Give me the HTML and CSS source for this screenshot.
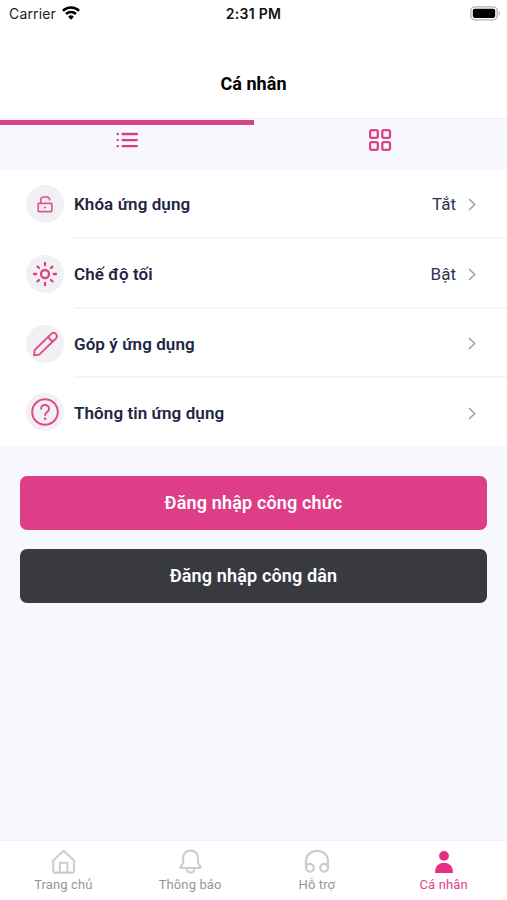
FILE: index.html
```html
<!DOCTYPE html>
<html lang="vi">
<head>
<meta charset="utf-8">
<meta name="viewport" content="width=device-width, initial-scale=1">
<title>Cá nhân</title>
<link rel="stylesheet" href="styles.css">
</head>
<body>
<div class="screen">
  <div class="status">
    <div class="carrier"><span>Carrier</span>
      <svg width="18" height="14" viewBox="0 0 18 14"><g fill="none" stroke="#000" stroke-width="2.5"><path d="M.9 4.8a11.6 11.6 0 0 1 16.2 0"/><path d="M4 8a7.2 7.2 0 0 1 10 0"/></g><path d="M9 13.7 6.1 10.8a4.1 4.1 0 0 1 5.8 0z"/></svg>
    </div>
    <span class="clock">2:31 PM</span>
    <svg class="battery" width="31" height="15" viewBox="0 0 31 15"><rect x=".9" y=".9" width="26.2" height="13" rx="4" fill="#fff" stroke="#b3b3b3" stroke-width="1.4"/><rect x="2.8" y="2.8" width="22.4" height="9.2" rx="2"/><path d="M28.6 5.2q3 2.2 0 4.4z" fill="#b3b3b3"/></svg>
  </div>
  <header class="title">Cá nhân</header>
  <nav class="tabs">
    <div class="tab tab-active">
      <svg width="24" height="24" viewBox="0 0 24 24" stroke="#d83d86" stroke-width="2.3" stroke-linecap="round"><path d="M7.5 6h14.4M7.5 12.1h14.4M7.5 18.2h14.4M2.6 6h.2M2.6 12.1h.2M2.6 18.2h.2"/></svg>
    </div>
    <div class="tab">
      <svg width="24" height="24" viewBox="0 0 24 24" fill="none" stroke="#d84486" stroke-width="2.3"><rect x="2.1" y="2.1" width="7.7" height="7.7" rx="1.6"/><rect x="14.3" y="2.1" width="7.7" height="7.7" rx="1.6"/><rect x="2.1" y="14.1" width="7.7" height="7.7" rx="1.6"/><rect x="14.3" y="14.1" width="7.7" height="7.7" rx="1.6"/></svg>
    </div>
  </nav>
  <main class="list">
    <div class="row">
      <span class="badge"><svg width="38" height="38" viewBox="0 0 38 38"><g fill="none" stroke="#e45090" stroke-width="1.6" stroke-linejoin="round"><rect x="12.2" y="18.4" width="13.6" height="8.2" rx=".6"/><path d="M14.8 18.2v-3.4q0-2.8 2.8-2.8h3.2q2.8 0 2.8 2.8v.6"/></g><circle cx="19" cy="22.5" r="1.1" fill="#e45090"/></svg></span>
      <div class="cell"><span class="label">Khóa ứng dụng</span><span class="value">Tắt</span><svg class="chevron" width="8" height="13" viewBox="0 0 8 13"><path d="m1 1 5.7 5.5L1 12"/></svg></div>
    </div>
    <div class="row">
      <span class="badge"><svg width="38" height="38" viewBox="0 0 38 38" fill="none" stroke="#df3f86" stroke-width="2.3" stroke-linecap="round"><circle cx="19" cy="19" r="4"/><path d="M19 8v2.2M19 27.8V30M8 19h2.2M27.8 19H30M11.6 11.6l1.4 1.4M25 25l1.4 1.4M11.6 26.4l1.4-1.4M25 13l1.4-1.4"/></svg></span>
      <div class="cell"><span class="label">Chế độ tối</span><span class="value">Bật</span><svg class="chevron" width="8" height="13" viewBox="0 0 8 13"><path d="m1 1 5.7 5.5L1 12"/></svg></div>
    </div>
    <div class="row">
      <span class="badge"><svg width="38" height="38" viewBox="0 0 38 38" fill="none" stroke="#e24a8e" stroke-width="1.8" stroke-linejoin="round"><path d="M8 30.4 8.7 25 25.3 8.8c3-2.8 7.6 1.6 4.6 4.7L13.2 29.7z"/><path d="M22.6 11.5q.8 3.8 4.7 4.7"/></svg></span>
      <div class="cell"><span class="label">Góp ý ứng dụng</span><svg class="chevron" width="8" height="13" viewBox="0 0 8 13"><path d="m1 1 5.7 5.5L1 12"/></svg></div>
    </div>
    <div class="row">
      <span class="badge"><svg width="38" height="38" viewBox="0 0 38 38"><g fill="none" stroke="#e24a8e" stroke-width="2" stroke-linecap="round"><circle cx="19" cy="19" r="12.8"/><path d="M15.1 15.8c.2-5.2 8.1-5 8 .1 0 3.2-4 3-4 6.2"/></g><circle cx="19.1" cy="25.7" r="1.3" fill="#e24a8e"/></svg></span>
      <div class="cell"><span class="label">Thông tin ứng dụng</span><svg class="chevron" width="8" height="13" viewBox="0 0 8 13"><path d="m1 1 5.7 5.5L1 12"/></svg></div>
    </div>
  </main>
  <div class="actions">
    <button class="button primary">Đăng nhập công chức</button>
    <button class="button dark">Đăng nhập công dân</button>
  </div>
  <nav class="bottom">
    <div class="item">
      <svg width="26" height="26" viewBox="0 0 26 26" fill="none" stroke="#ceccd3" stroke-width="2.1" stroke-linejoin="round"><path d="M3.2 11.4 13.6 1.8 24 11.4V22q0 1.6-1.6 1.6H4.8q-1.6 0-1.6-1.6z"/><path d="M9.8 23.6v-9.8h7.6v9.8"/></svg>
      <span>Trang chủ</span>
    </div>
    <div class="item">
      <svg width="26" height="26" viewBox="0 0 26 26" fill="none" stroke="#ceccd3" stroke-width="2.1" stroke-linejoin="round"><path d="M6.2 14V8.8c0-9.6 14.8-9.6 14.8 0V14l2.6 3.8q.5 1.2-.9 1.2H4.5q-1.4 0-.9-1.2z"/><path d="M9.6 19.3c.3 5.7 7.7 5.7 8 0"/></svg>
      <span>Thông báo</span>
    </div>
    <div class="item">
      <svg width="26" height="26" viewBox="0 0 26 26" fill="none" stroke="#cbcad2" stroke-width="2.2"><path d="M2 18.5v-6C2-1.8 24-1.8 24 12.5v6"/><circle cx="5.9" cy="18.7" r="3.9"/><circle cx="20.1" cy="18.7" r="3.9"/></svg>
      <span>Hỗ trợ</span>
    </div>
    <div class="item item-active">
      <svg width="26" height="26" viewBox="0 0 26 26" fill="#e72c83"><circle cx="13" cy="6.9" r="4.9"/><path d="M4.2 23.9v-1.5c0-11.4 17.6-11.4 17.6 0v1.5z"/></svg>
      <span>Cá nhân</span>
    </div>
  </nav>
</div>
</body>
</html>
```

FILE: styles.css
```css
* { box-sizing: border-box; }
body { margin: 0; font-family: Roboto, "Noto Sans", sans-serif; color: #232543; }
svg { display: block; flex: none; }
.screen { width: 507px; height: 900px; display: flex; flex-direction: column; background: #f7f8fd; overflow: hidden; }
.status { height: 50px; padding: 6px 6px 0 9px; display: grid; grid-template-columns: 1fr auto 1fr; align-items: start; background: #fff; font-family: Inter, sans-serif; font-size: 14px; line-height: 16px; color: #222; }
.carrier { display: flex; gap: 6px; letter-spacing: .15px; }
.clock { margin-right: 3px; font-weight: 600; color: #111; letter-spacing: .3px; }
.battery { justify-self: end; }
.title { height: 69px; flex: none; background: #fff; border-bottom: 1px solid #eeeff3; text-align: center; font-size: 18px; line-height: 68px; font-weight: 700; color: #000; letter-spacing: .05px; }
.tabs { height: 50px; flex: none; display: flex; }
.tab { flex: 1; display: flex; justify-content: center; align-items: flex-start; padding-top: 9px; }
.tab-active { margin-top: 1px; border-top: 5px solid #d94088; padding-top: 3px; }
.list { height: 277px; flex: none; background: #fff; display: grid; grid-template-rows: 70px 70px 69px 68px; }
.row { display: flex; align-items: center; padding-left: 26px; }
.badge { width: 38px; height: 38px; margin-right: 10px; border-radius: 50%; background: #f1f1f3; }
.cell { flex: 1; align-self: stretch; display: flex; align-items: center; padding: 2px 31px 0 0; border-bottom: 2px solid #f5f5f7; }
.row:last-child .cell { border-bottom: 0; }
.label { flex: 1; font-size: 17px; line-height: 24px; font-weight: 600; letter-spacing: .08px; }
.value { font-size: 17px; line-height: 24px; margin-right: 12px; color: #303250; }
.chevron { fill: none; stroke: #a3a3a8; stroke-width: 1.6; }
.actions { flex: 1; padding: 30px 20px 0; display: flex; flex-direction: column; gap: 19px; }
.button { height: 54px; border: 0; border-radius: 7px; font: 600 18px/54px Roboto, "Noto Sans", sans-serif; letter-spacing: .15px; padding: 0; color: #fff; }
.primary { background: #dd3e87; }
.dark { background: #393a3f; }
.bottom { height: 60px; flex: none; display: flex; background: #fff; border-top: 1px solid #f0f1f5; padding-top: 8px; }
.item { flex: 1; display: flex; flex-direction: column; align-items: center; font-size: 13px; line-height: 19px; color: #96969a; letter-spacing: .12px; }
.item-active { color: #e6408c; }
```
